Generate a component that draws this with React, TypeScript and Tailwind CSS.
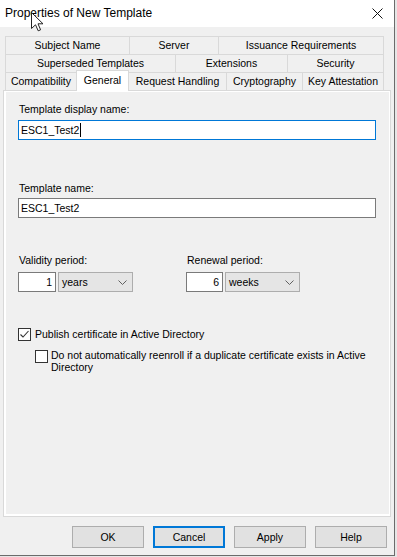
import React from 'react';

const font = { fontFamily: '"Liberation Sans", Arial, sans-serif' };

type Tab = { label: string; w: string; selected?: boolean; noLeft?: boolean };

const rows: Tab[][] = [
  [
    { label: 'Subject Name', w: 'w-[124px]' },
    { label: 'Server', w: 'w-[89px]' },
    { label: 'Issuance Requirements', w: 'w-[166px]' },
  ],
  [
    { label: 'Superseded Templates', w: 'w-[170px]' },
    { label: 'Extensions', w: 'w-[112px]' },
    { label: 'Security', w: 'w-[97px]' },
  ],
  [
    { label: 'Compatibility', w: 'w-[71px]' },
    { label: 'General', w: 'w-[53px]', selected: true },
    { label: 'Request Handling', w: 'w-[97px]', noLeft: true },
    { label: 'Cryptography', w: 'w-[76px]' },
    { label: 'Key Attestation', w: 'w-[82px]' },
  ],
];

const Chevron = () => (
  <svg width="9" height="5" viewBox="0 0 9 5" className="shrink-0">
    <path d="M0.5 0.5 L4.5 4.5 L8.5 0.5" fill="none" stroke="#606060" strokeWidth="1" />
  </svg>
);

const Spin = ({ value, w }: { value: string; w: string }) => (
  <div className={`${w} h-[20px] bg-white border border-[#7a7a7a] flex items-center justify-end pr-[3px]`}>
    {value}
  </div>
);

const Combo = ({ value }: { value: string }) => (
  <div className="w-[75px] h-[20px] ml-[2px] bg-[#e5e5e5] border border-[#adadad] flex items-center justify-between pl-[3px] pr-[5px]">
    <span>{value}</span>
    <Chevron />
  </div>
);

const CheckBox = ({ checked }: { checked?: boolean }) => (
  <div className="w-[13px] h-[13px] shrink-0 bg-white border border-[#333333] flex items-center justify-center">
    {checked && (
      <svg width="11" height="11" viewBox="0 0 11 11">
        <path d="M1.5 5.5 L4 8 L9.5 2" fill="none" stroke="#333333" strokeWidth="1.1" />
      </svg>
    )}
  </div>
);

const Button = ({ label, focused }: { label: string; focused?: boolean }) => (
  <div
    className={`w-[72px] h-[22px] bg-[#e1e1e1] flex items-center justify-center ${
      focused ? 'border-2 border-[#0078d7]' : 'border border-[#adadad]'
    }`}
  >
    {label}
  </div>
);

export default function App() {
  return (
    <div className="w-[397px] h-[557px] bg-[#e6e6e6] overflow-hidden relative text-[10.5px] leading-[13px] text-black" style={font}>
      <div className="w-[395px] h-[556px] border-r border-b border-[#6b6b6b] flex flex-col bg-[#f0f0f0]">
        {/* title bar */}
        <div className="h-[27px] shrink-0 bg-white flex items-center justify-between pl-[5px] pr-[11px]">
          <span className="text-[12px]">Properties of New Template</span>
          <svg width="11" height="11" viewBox="0 0 11 11">
            <path d="M0.5 0.5 L10.5 10.5 M10.5 0.5 L0.5 10.5" stroke="#111" strokeWidth="1" />
          </svg>
        </div>

        {/* tabs */}
        <div className="pt-[9px] pl-[5px] flex flex-col">
          {rows.map((row, i) => (
            <div key={i} className="flex h-[18px]">
              {row.map((t, j) => (
                <div
                  key={t.label}
                  className={`${t.w} flex items-center justify-center border-t border-[#d9d9d9] ${
                    t.noLeft ? '' : 'border-l'
                  } ${j === row.length - 1 ? 'border-r' : ''} ${
                    t.selected
                      ? 'relative z-10 bg-white border-r h-[21px] -mt-[2px] pb-[2px]'
                      : 'bg-[#f0f0f0]'
                  }`}
                >
                  {t.label}
                </div>
              ))}
            </div>
          ))}
        </div>

        {/* tab page */}
        <div className="mx-[3px] h-[427px] border border-[#d9d9d9]">
          <div className="h-full border-t border-r border-l-2 border-b-2 border-white bg-[#f0f0f0] pl-[12px] pt-[11px] flex flex-col">
            <div className="pl-px">Template display name:</div>
            <div className="mt-[4px] w-[358px] h-[20px] bg-white border border-[#0078d7] flex items-center pl-[2px]">
              <span>ESC1_Test2</span>
              <span className="w-px h-[14px] bg-black ml-px" />
            </div>

            <div className="mt-[42px] pl-px">Template name:</div>
            <div className="mt-[3px] w-[358px] h-[20px] bg-white border border-[#7a7a7a] flex items-center pl-[2px]">
              ESC1_Test2
            </div>

            <div className="mt-[36px] flex">
              <div className="w-[168px] flex flex-col">
                <div className="pl-px">Validity period:</div>
                <div className="mt-[5px] flex">
                  <Spin value="1" w="w-[38px]" />
                  <Combo value="years" />
                </div>
              </div>
              <div className="flex flex-col">
                <div className="pl-px">Renewal period:</div>
                <div className="mt-[5px] flex">
                  <Spin value="6" w="w-[37px]" />
                  <Combo value="weeks" />
                </div>
              </div>
            </div>

            <div className="mt-[36px] flex items-center gap-[4px]">
              <CheckBox checked />
              <span>Publish certificate in Active Directory</span>
            </div>
            <div className="mt-[9px] ml-[17px] flex items-start gap-[3px]">
              <CheckBox />
              <span className="leading-[12px] -mt-px whitespace-nowrap">
                Do not automatically reenroll if a duplicate certificate exists in Active
                <br />
                Directory
              </span>
            </div>
          </div>
        </div>

        {/* buttons */}
        <div className="mt-[9px] flex justify-end gap-[9px] pr-[7px]">
          <Button label="OK" />
          <Button label="Cancel" focused />
          <Button label="Apply" />
          <Button label="Help" />
        </div>
      </div>

      {/* mouse pointer */}
      <svg className="absolute left-[31px] top-[12px]" width="13" height="20" viewBox="0 0 13 20">
        <path
          d="M0.5 0.5 L0.5 16.5 L4.5 12.8 L7.2 18.8 L9.6 17.8 L7 11.8 L12 11.8 Z"
          fill="white"
          stroke="#222"
          strokeWidth="1"
          strokeLinejoin="round"
        />
      </svg>
    </div>
  );
}
